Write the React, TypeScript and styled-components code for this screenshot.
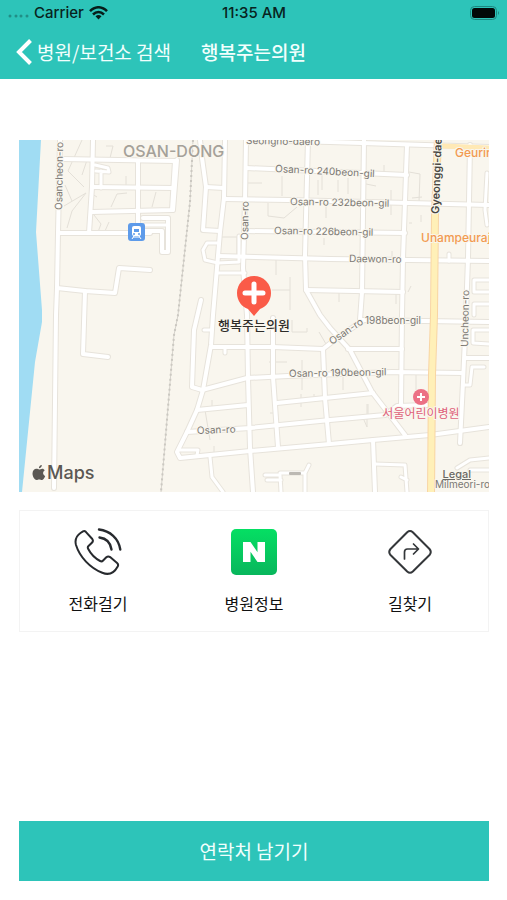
import React from "react";
import styled, { createGlobalStyle } from "styled-components";

const teal = "#2dc4b9";
const fontStack = '"Inter", "Noto Sans CJK KR", sans-serif';
const koreanStack = '"Noto Sans CJK KR", sans-serif';

const GlobalStyle = createGlobalStyle`
  * { box-sizing: border-box; }
  body { margin: 0; background: #fff; font-family: ${koreanStack}; color: #111; }
  button { font: inherit; color: inherit; border: 0; padding: 0; background: none; cursor: pointer; }
`;

const Screen = styled.div`
  min-height: 100vh;
  display: flex;
  flex-direction: column;
`;

const Header = styled.header`
  background: ${teal};
`;

const StatusBar = styled.div`
  display: grid;
  grid-template-columns: 1fr auto 1fr;
  align-items: center;
  height: 26px;
  padding: 0 7px 0 8px;
  font: 500 15px/26px ${fontStack};
  color: #082320;
`;

const Signal = styled.div`
  display: flex;
  align-items: center;
  gap: 5px;
`;

const BatterySlot = styled.div`
  display: flex;
  justify-content: flex-end;
`;

const NavBar = styled.nav`
  display: grid;
  grid-template-columns: 1fr auto 1fr;
  align-items: center;
  height: 53px;
  padding: 0 16px 2px;
  color: #f2fffd;
  font-size: 19px;
  line-height: 28px;
`;

const BackButton = styled.button`
  display: flex;
  align-items: center;
  gap: 5px;
  white-space: nowrap;
`;

const Title = styled.h1`
  margin: 0;
  font-size: 19px;
  font-weight: 500;
  line-height: 28px;
`;

const Main = styled.main`
  flex: 1;
  display: flex;
  flex-direction: column;
  padding: 61px 18px 19px 19px;
`;

const MapPanel = styled.section`
  position: relative;
  display: flex;
  overflow: hidden;
  background: #f9f6ee;
`;

const MapDrawing = styled.svg`
  display: block;
  width: 100%;
  height: auto;
  font-family: ${fontStack};
`;

const MapBrand = styled.div`
  position: absolute;
  left: 13px;
  bottom: 6px;
  display: flex;
  align-items: center;
  gap: 1px;
  color: #5b5853;
  font: 500 18px/26px ${fontStack};
`;

const LegalLink = styled.a`
  position: absolute;
  right: 18px;
  bottom: 10px;
  color: #6b6964;
  font: 500 11px/16px ${fontStack};
  text-decoration: underline;
`;

const Actions = styled.section`
  display: grid;
  grid-template-columns: repeat(3, 1fr);
  margin: 18px 0 24px;
  border: 1px solid #f3f3f3;
`;

const Action = styled.button`
  display: flex;
  flex-direction: column;
  align-items: center;
  gap: 15px;
  padding: 17px 0 16px;
  font-size: 16px;
  line-height: 24px;
`;

const SubmitButton = styled.button`
  margin-top: auto;
  height: 60px;
  background: ${teal};
  color: #f2fffd;
  font-size: 19px;
  line-height: 28px;
`;

const roads = [
  "M60 140L58 233L57 288L56 315L54 488",
  "M62 159L175 161L172 210L92 212",
  "M93 140L92 187L89 233",
  "M92 187L174 188",
  "M138 161L138 225",
  "M58 233L150 233",
  "M143 218H168V252H162V231H145",
  "M57 288L85 291L115 293L119 268L150 270",
  "M85 291L83 354L108 357",
  "M225 140L224 198L220 232L217 268L213 315L211 345L203 390L197 410L187 432L177 452L180 458L210 455L250 451L330 444L373 440L430 435L489 427",
  "M200 140L202 158L206 187L203 230L220 231",
  "M206 187L224 188",
  "M177 160L173 210",
  "M246 140L245 202L243 268L247 315L248 378L250 448L253 492",
  "M308 140L305 255L306 290L320 315L330 328L350 350L372 392L405 435",
  "M246 168L407 175",
  "M225 199L288 200L489 205",
  "M246 231L405 233",
  "M218 256L330 259L489 261",
  "M246 140L330 142L489 147",
  "M364 140L362 292L360 320",
  "M407 145L403 258L402 315L401 405",
  "M306 290L403 292",
  "M470 145L468 258L466 315L463 382L460 443",
  "M360 320L489 322",
  "M348 349L402 349",
  "M202 390L247 378L288 376L392 372L463 373",
  "M211 347L273 347L323 349L337 338L364 320",
  "M273 318L273 377L278 447",
  "M323 349L325 398L329 444",
  "M201 300L194 330L192 387L202 390",
  "M197 410L248 405",
  "M277 403L325 398L373 393",
  "M187 432L250 428L330 420L385 415L397 406L427 405",
  "M373 440L375 492",
  "M465 358L489 358",
];

const lanes = [
  "M95 165L108 168L109 172L96 171M101 171V188",
  "M145 225H166",
  "M217 243H207L203 250L205 260L218 263L239 262V236",
  "M218 273H245",
  "M180 450H198L197 455",
  "M210 457L212 477L223 492",
  "M265 475L280 475L281 492M267 480H281M280 473H305L309 465M305 473V492",
  "M375 464L405 465L407 492M407 480L401 477",
  "M463 385H470L472 367L484 367",
  "M489 330H473V343L489 344",
  "M489 280H474V292H489",
  "M489 304H474V315",
  "M487 173L485 210L487 225",
  "M457 468L470 460L489 458M470 470H489",
  "M449 261V254M211 330H204M225 348V353",
];

const paths = [
  "M82 140L68 171L84 187M65 185L72 201M64 206L86 193M67 228L72 211L86 193M87 160L82 175M106 146H113L109 162M126 188V176M111 207L117 194L127 193M156 192L152 207M94 215L101 224L98 232M105 231L109 222M92 194L97 197",
  "M248 183H262M282 176V196M268 203V216L284 218L297 207M318 180V195M322 170V190M326 206V218M324 238V245M276 260V275M290 277V290L272 290M222 237H237V255M290 290V310",
  "M409 172L420 174L419 202M384 165V175M366 184L376 186M391 190V215M338 180V192M348 178V194M412 198L422 197M392 251V258M396 294V304M339 293V302M409 223H412M411 286L408 292M421 215V222",
  "M292 320V332H307V328M269 362H287M302 360V390M301 394V407M314 394V402M212 400V407M205 410L210 440M214 446V453M343 375V390M367 404V427L364 420M416 372V390M368 404V418M319 332L326 344M270 413H274",
];

const streetLabels = [
  { text: "Osan-ro 240beon-gil", x: 275, y: 172, turn: 3 },
  { text: "Osan-ro 232beon-gil", x: 290, y: 205, turn: 1 },
  { text: "Osan-ro 226beon-gil", x: 274, y: 234, turn: 1 },
  { text: "Daewon-ro", x: 349, y: 262, turn: 1 },
  { text: "Osan-ro 190beon-gil", x: 289, y: 377, turn: -1 },
  { text: "198beon-gil", x: 365, y: 324, turn: 0 },
  { text: "Osan-ro", x: 332, y: 345, turn: -34 },
  { text: "Osan-ro", x: 197, y: 434, turn: -2 },
  { text: "Osan-ro", x: 248, y: 240, turn: -89 },
  { text: "Osancheon-ro", x: 62, y: 210, turn: -89 },
  { text: "Uncheon-ro", x: 468, y: 347, turn: -89 },
  { text: "Seongho-daero", x: 246, y: 144, turn: 1 },
  { text: "Milmeori-ro", x: 435, y: 488, turn: 0 },
];

function AreaMap() {
  return (
    <MapDrawing viewBox="19 140 470 352" role="img" aria-label="행복주는의원 지도">
      <rect x="19" y="140" width="470" height="352" fill="#f9f6ee" />
      <path d="M19 140H41L36 232L42 310L42 322L35 362L22 492H19Z" fill="#a0dcf3" />
      <g fill="none" stroke="#e4e0d8" strokeWidth="1">
        {paths.map((d) => <path key={d} d={d} />)}
      </g>
      <g fill="none" strokeLinejoin="round" strokeLinecap="round">
        <g stroke="#e8e4dc" strokeWidth="5">
          {lanes.map((d) => <path key={d} d={d} />)}
        </g>
        <g stroke="#e7e3db" strokeWidth="6">
          {roads.map((d) => <path key={d} d={d} />)}
        </g>
        <g stroke="#fff" strokeWidth="3">
          {lanes.map((d) => <path key={d} d={d} />)}
        </g>
        <g stroke="#fff" strokeWidth="4">
          {roads.map((d) => <path key={d} d={d} />)}
        </g>
        <path d="M443 146L489 148" stroke="#ffe9b5" strokeWidth="5" />
        <path d="M438 138L435 215L434 315L432 375L431 494" stroke="#f8d5a4" strokeWidth="8" />
        <path d="M438 138L435 215L434 315L432 375L431 494" stroke="#fff0b8" strokeWidth="6" />
      </g>
      <path d="M193 140L190 202L178 315L174 335L161 492" fill="none" stroke="#d6d3cc" strokeWidth="1" />
      <path d="M193 140L190 202L178 315L174 335L161 492" fill="none" stroke="#cbc8c1" strokeWidth="2" strokeDasharray="2 3" />

      <g fontSize="10" fill="#7b7873" stroke="#f9f6ee" strokeWidth="2" paintOrder="stroke" strokeLinejoin="round">
        {streetLabels.map(({ text, x, y, turn }) => (
          <text key={`${text}-${x}`} transform={`translate(${x} ${y}) rotate(${turn})`}>{text}</text>
        ))}
        <text x="123" y="157" fontSize="16" fontWeight="500" fill="#a5a199">OSAN-DONG</text>
        <text transform="translate(439 214) rotate(-88)" fontSize="11" fontWeight="600" fill="#494741">Gyeonggi-daero</text>
        <text x="455" y="157" fontSize="12" fontWeight="500" fill="#f29a51">Geurim</text>
        <text x="421" y="242" fontSize="12" fontWeight="500" fill="#f29a51">Unampeurajio</text>
        <text x="421" y="418" fontSize="12" textAnchor="middle" fill="#df607a">서울어린이병원</text>
      </g>

      <rect x="128" y="223" width="17" height="18" rx="3" fill="#5e9bea" />
      <rect x="132" y="226" width="9" height="10" rx="2" fill="#fff" />
      <path d="M134 229H139V232H134Z" fill="#5e9bea" />
      <path d="M134 236L132 239M139 236L141 239M133 237H140" stroke="#fff" />
      <circle cx="134" cy="234" r="1" fill="#5e9bea" />
      <circle cx="139" cy="234" r="1" fill="#5e9bea" />

      <circle cx="421" cy="397" r="8" fill="#ec7185" />
      <path d="M421 393V401M417 397H425" stroke="#fff" strokeWidth="2" />
      <rect x="289" y="472" width="12" height="3" rx="1" fill="#bcb9b3" />

      <path d="M254 276a17 17 0 0 1 17 17c0 8-5 14-11 16l-6 7-6-7c-6-2-11-8-11-16a17 17 0 0 1 17-17Z" fill="#fa5b48" />
      <path d="M254 284V302M245 293H263" stroke="#fff" strokeWidth="5" strokeLinecap="round" />
      <text x="254" y="330" fontSize="13" fontWeight="500" textAnchor="middle" fill="#2e2c29" stroke="#f9f6ee" strokeWidth="2" paintOrder="stroke">행복주는의원</text>
    </MapDrawing>
  );
}

function WifiIcon() {
  return (
    <svg width="19" height="14" viewBox="0 0 19 14" aria-hidden="true" fill="none" stroke="#061d1a" strokeWidth="2.5">
      <path d="M1 5.2C6-.1 13-.1 18 5.2M4 8.5c3.3-3.2 7.7-3.2 11 0" />
      <path d="M6.5 10.2c1.9-1.600 4.100-1.600 6 0L9.500 13.500Z" fill="#061d1a" stroke="none" />
    </svg>
  );
}

function AppleIcon() {
  return (
    <svg width="14" height="16" viewBox="0 0 14 16" aria-hidden="true" fill="currentColor">
      <path d="M9.800 0c.2 1.700-1.300 3.300-2.900 3.300C6.700 1.700 8.200.2 9.800 0ZM12.700 5.500c-2.300 1.400-2 4.400.5 5.400-.7 2-2 4.100-3.400 4.100-1 0-1.400-.6-2.600-.6s-1.700.6-2.600.6C2.700 15 .5 11.600.5 8.500c0-3.100 1.900-4.700 3.900-4.700 1.200 0 2.100.7 2.800.7s1.700-.8 3.100-.8c1 0 1.900.6 2.400 1.800Z" />
    </svg>
  );
}

function CallIcon() {
  return (
    <svg width="48" height="48" viewBox="0 0 48 48" aria-hidden="true" fill="none" stroke="#272a2e" strokeWidth="2" strokeLinecap="round" strokeLinejoin="round">
      <path d="M6.500 5L9 3.300q1.500-.8 2.800.5l6.500 7.200q1.400 1.900-.4 3.700L14.500 18q-1.200 1.200-.4 2.800c2.700 5.200 6.800 9.500 12 12.200q1.700.9 3-.5l3.200-3.200q1.900-1.600 3.800-.2l7 5.800q1.700 1.600.6 3.500c-3.600 6.600-8.900 9-15.400 6.400C16.100 40 5.700 29 2 17 .7 12.200 2.200 8 6.500 5Z" />
      <path d="M25 1.500c11 1.200 19.700 8.900 21.300 20M25.500 9.500c6.500.8 11 5.300 12 12" strokeWidth="2.400" />
    </svg>
  );
}

function InfoIcon() {
  return (
    <svg width="48" height="48" viewBox="0 0 48 48" aria-hidden="true">
      <defs>
        <linearGradient id="info-fill" x2="0" y2="1">
          <stop stopColor="#05df63" />
          <stop offset="1" stopColor="#08b65c" />
        </linearGradient>
      </defs>
      <rect x="1" y="1" width="46" height="46" rx="5" fill="url(#info-fill)" />
      <path d="M13 14h7.500l7 10.200V14H35v20h-7.500l-7-10.200V34H13Z" fill="#fff" />
    </svg>
  );
}

function RouteIcon() {
  return (
    <svg width="48" height="48" viewBox="0 0 48 48" aria-hidden="true" fill="none" stroke="#34373a" strokeLinecap="round" strokeLinejoin="round">
      <path d="M21.200 4.200Q24 1.800 26.800 4.200L43.500 21Q46 24 43.500 27L26.800 43.500Q24 46 21.200 43.500L4.500 27Q2 24 4.500 21Z" strokeWidth="2" />
      <path d="M18.500 31V24q0-3 3-3H32M27.500 16l5 5-5 5" strokeWidth="1.700" />
    </svg>
  );
}

export default function App() {
  return (
    <Screen>
      <GlobalStyle />
      <Header>
        <StatusBar>
          <Signal>
            <svg width="21" height="10" viewBox="0 0 21 10" aria-hidden="true" fill="#218e86">
              <circle cx="2" cy="8" r="1.500" /><circle cx="8" cy="8" r="1.500" />
              <circle cx="13" cy="8" r="1.500" /><circle cx="19" cy="8" r="1.500" />
            </svg>
            <span>Carrier</span>
            <WifiIcon />
          </Signal>
          <time>11:35 AM</time>
          <BatterySlot>
            <svg width="31" height="14" viewBox="0 0 31 14" aria-label="배터리">
              <rect x="1.500" y=".5" width="26" height="13" rx="4" fill="none" stroke="#1c8880" />
              <rect x="3" y="2" width="23" height="10" rx="2.500" fill="#020908" />
              <path d="M29 5v4q2-2 0-4Z" fill="#1c8880" />
            </svg>
          </BatterySlot>
        </StatusBar>
        <NavBar>
          <BackButton type="button">
            <svg width="16" height="26" viewBox="0 0 16 26" aria-hidden="true" fill="none" stroke="#fff" strokeWidth="4">
              <path d="M14.500 1.500L3 13l11.500 11.500" />
            </svg>
            병원/보건소 검색
          </BackButton>
          <Title>행복주는의원</Title>
        </NavBar>
      </Header>
      <Main>
        <MapPanel>
          <AreaMap />
          <MapBrand><AppleIcon />Maps</MapBrand>
          <LegalLink href="#legal">Legal</LegalLink>
        </MapPanel>
        <Actions>
          <Action type="button"><CallIcon />전화걸기</Action>
          <Action type="button"><InfoIcon />병원정보</Action>
          <Action type="button"><RouteIcon />길찾기</Action>
        </Actions>
        <SubmitButton type="button">연락처 남기기</SubmitButton>
      </Main>
    </Screen>
  );
}
